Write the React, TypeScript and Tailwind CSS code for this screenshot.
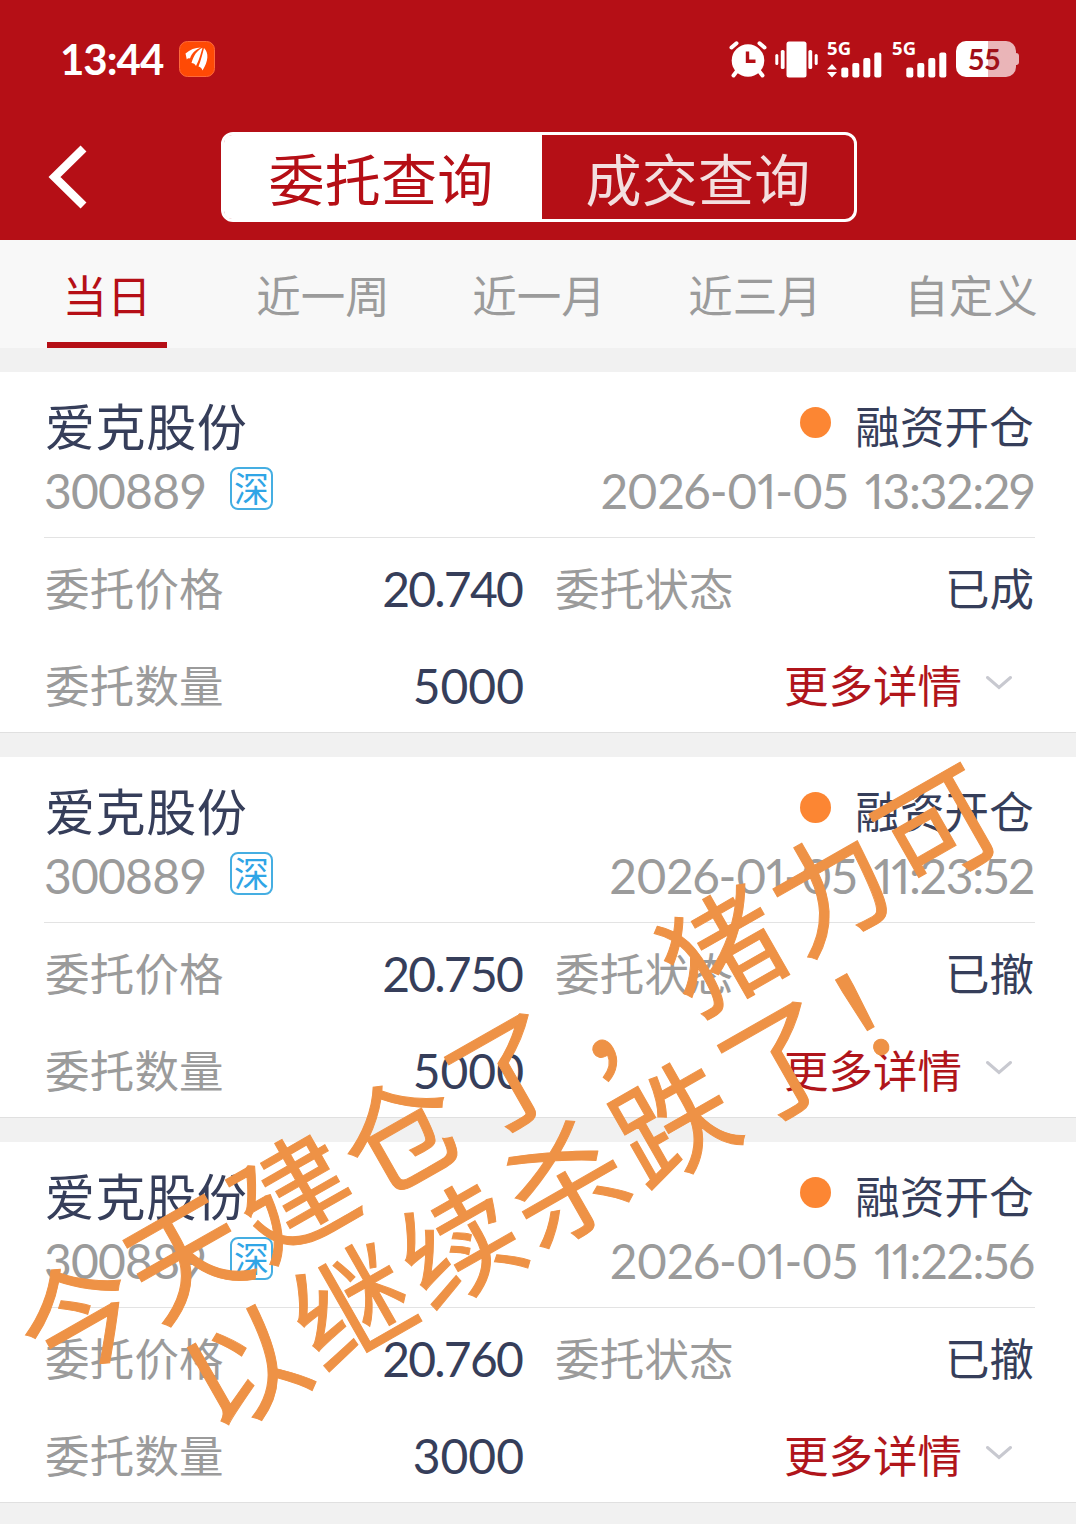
type Order = {
  name: string;
  side: string;
  code: string;
  date: string;
  time: string;
  price: string;
  status: string;
  amount: string;
};

const orders: Order[] = [
  {
    name: "爱克股份",
    side: "融资开仓",
    code: "300889",
    date: "2026-01-05",
    time: "13:32:29",
    price: "20.740",
    status: "已成",
    amount: "5000",
  },
  {
    name: "爱克股份",
    side: "融资开仓",
    code: "300889",
    date: "2026-01-05",
    time: "11:23:52",
    price: "20.750",
    status: "已撤",
    amount: "5000",
  },
  {
    name: "爱克股份",
    side: "融资开仓",
    code: "300889",
    date: "2026-01-05",
    time: "11:22:56",
    price: "20.760",
    status: "已撤",
    amount: "3000",
  },
];

const tabs = ["当日", "近一周", "近一月", "近三月", "自定义"];

function AppBadge() {
  return (
    <svg width="36" height="36" viewBox="0 0 36 36">
      <rect x="0.5" y="0.5" width="35" height="35" rx="8" fill="#ff4a05" stroke="#ff6a3a" />
      <g fill="#fff">
        <path d="M6.500 12.500C11 8.500 16 6.500 22 6.500C16 9 12.500 12.500 11 17.500C9.500 17 8.500 17.500 7.800 18.500Z" />
        <path d="M12.500 22C15 14 18 9.500 23.500 6.800C22 12 20.500 18 17 25C16 23 14.500 22 12.500 22Z" />
        <path d="M19.500 25.500C22 19 23.500 13 25 7C30 12 29.500 20 23.500 29.500C23 27.500 21.500 26 19.500 25.500Z" />
      </g>
    </svg>
  );
}

function AlarmIcon() {
  return (
    <svg width="38" height="37" viewBox="0 0 38 37">
      <g stroke="#fff" strokeWidth="4" strokeLinecap="round" fill="none">
        <path d="M2.500 6.500L7.500 2.300M35.500 6.500L30.500 2.300" />
        <path d="M8 30L4.500 34.500M30 30L33.500 34.500" />
      </g>
      <circle cx="19" cy="19.500" r="16.300" fill="#fff" />
      <path d="M18.500 10.500V20.200H26.500" stroke="#b50f16" strokeWidth="3.400" fill="none" />
    </svg>
  );
}

function VibrateIcon() {
  return (
    <svg width="43" height="37" viewBox="0 0 43 37" fill="#fff">
      <rect x="11.500" y="0.500" width="20" height="36" rx="2.500" />
      <rect x="0.300" y="13" width="3" height="11" rx="1.500" />
      <rect x="5.800" y="9" width="3.800" height="19" rx="1.600" />
      <rect x="33.400" y="9" width="3.800" height="19" rx="1.600" />
      <rect x="39.700" y="13" width="3" height="11" rx="1.500" />
    </svg>
  );
}

function Signal({ arrows = false }: { arrows?: boolean }) {
  return (
    <div className="relative h-[37px] w-[55px]">
      <span className="absolute -top-[2px] left-0 font-['Noto_Sans',sans-serif] text-[18.5px] leading-[18px] font-bold tracking-[0.2px]">
        5G
      </span>
      <svg width="55" height="37" viewBox="0 0 55 37" fill="#fff">
        {arrows && <path d="M0 28.500L5 23L10 28.500ZM0 31L5 36.500L10 31Z" />}
        <rect x="14.300" y="26.500" width="7" height="10" rx="2" />
        <rect x="25.300" y="22" width="7" height="14.500" rx="2" />
        <rect x="36.300" y="17" width="7" height="19.500" rx="2" />
        <rect x="47.300" y="11.500" width="7" height="25" rx="2" />
      </svg>
    </div>
  );
}

function Battery() {
  return (
    <div className="flex items-center">
      <div className="flex h-9 w-[60px] items-center justify-center rounded-[10px] bg-linear-to-r from-white from-53% to-[#eab5b8] to-53% pr-1 font-['Lato'] text-[29px] leading-9 font-bold text-[#a00f18]">
        <span className="tracking-[-0.6px]">55</span>
      </div>
      <div className="h-3 w-[3px] rounded-r-sm bg-[#eab5b8]" />
    </div>
  );
}

function Header() {
  return (
    <header className="h-60 bg-[#b50f16] text-white">
      <div className="flex h-[118px] items-center pr-[57px] pl-[60px]">
        <span className="w-[103px] font-['Lato'] text-[42px] leading-none font-bold tracking-[-1px]">13:44</span>
        <div className="ml-4">
          <AppBadge />
        </div>
        <div className="ml-auto flex items-center">
          <AlarmIcon />
          <div className="ml-2">
            <VibrateIcon />
          </div>
          <div className="ml-[9px]">
            <Signal arrows />
          </div>
          <div className="ml-[10px]">
            <Signal />
          </div>
          <div className="ml-[9px]">
            <Battery />
          </div>
        </div>
      </div>
      <div className="flex pt-[14px]">
        <div className="flex w-[221px] items-center pl-12">
          <svg width="40" height="64" viewBox="0 0 40 64" fill="none">
            <path d="M35.500 3.500L6.500 32L35.500 60.500" stroke="#fff" strokeWidth="8.400" />
          </svg>
        </div>
        <div className="flex h-[90px] w-[636px] rounded-xl border-[3px] border-white text-[56px] leading-[89px] tracking-[0.3px]">
          <div className="w-[318px] rounded-l-lg bg-white pr-1 text-center text-[#b50f16]">委托查询</div>
          <div className="flex-1 text-center text-[#f3dfe0]">成交查询</div>
        </div>
      </div>
    </header>
  );
}

function OrderCard({ order }: { order: Order }) {
  return (
    <section className="mb-6 h-[361px] border-b border-[#e0e0e0] bg-white pr-[42px] pl-[45px] text-[44.5px] text-[#363e5a]">
      <div className="-mr-px -ml-px h-[166px] border-b border-[#e3e3e3] pt-[23px]">
        <div className="flex h-16 items-center">
          <span className="ml-px text-[50px] leading-none tracking-[0.6px]">{order.name}</span>
          <span className="mt-[-9px] ml-auto size-[31px] rounded-full bg-[#fc8633]" />
          <span className="mr-px ml-6 leading-none tracking-[0.2px]">{order.side}</span>
        </div>
        <div className="flex h-16 items-center text-[48px] leading-none text-[#9b9b9b]">
          <span className="w-40 tracking-[-0.8px]">{order.code}</span>
          <span className="mt-[-6px] ml-[26px] flex size-[43px] items-center justify-center rounded-lg border-2 border-[#45aee2] text-[35px] leading-none text-[#2fa5e6]">
            深
          </span>
          <span className="ml-auto tracking-[-1px] proportional-nums">{order.date}</span>
          <span className="mr-px ml-[17px] tracking-[-1.2px] proportional-nums">{order.time}</span>
        </div>
      </div>
      <div className="grid grid-cols-[479px_1fr] grid-rows-[97px_97px] gap-x-[31px] pt-[2px] leading-[97px]">
        <div className="flex justify-between">
          <span className="text-[#9b9b9b] tracking-[0.2px]">委托价格</span>
          <span className="pr-0.5 text-[48px] tracking-[-1.8px]">{order.price}</span>
        </div>
        <div className="flex justify-between">
          <span className="text-[#9b9b9b] tracking-[0.2px]">委托状态</span>
          <span>{order.status}</span>
        </div>
        <div className="flex justify-between">
          <span className="text-[#9b9b9b] tracking-[0.2px]">委托数量</span>
          <span className="text-[48px]">{order.amount}</span>
        </div>
        <div className="flex items-center justify-end pr-[22px] text-[#b0151b]">
          <span>更多详情</span>
          <svg className="mt-[-5px] ml-6" width="26" height="16" viewBox="0 0 26 16" fill="none">
            <path d="M1.500 2.500L13 12.500L24.500 2.500" stroke="#c8c9d0" strokeWidth="3" strokeLinecap="round" />
          </svg>
        </div>
      </div>
    </section>
  );
}

export default function App() {
  return (
    <div className="relative h-[1524px] w-[1076px] overflow-hidden bg-[#f1f1f1] font-['Lato','Noto_Sans_CJK_SC',sans-serif]">
      <Header />
      <nav className="mb-6 -ml-px flex h-[108px] bg-[#f8f8f8] text-[44.5px] leading-[112px] text-[#9b9b9b]">
        {tabs.map((tab, i) => (
          <div
            key={tab}
            className={
              i === 0
                ? "flex h-[108px] w-[216px] shrink-0 justify-center text-[#b50f16]"
                : "h-[108px] w-[216px] shrink-0 text-center"
            }
          >
            {i === 0 ? <span className="h-[108px] w-[120px] border-b-[6px] border-[#b50f16] text-center">{tab}</span> : tab}
          </div>
        ))}
      </nav>
      <main>
        {orders.map((order) => (
          <OrderCard key={order.time} order={order} />
        ))}
      </main>

      {/* Slanted note across the list */}
      <div className="absolute top-[995px] left-[-62px] w-[1200px] rotate-[-29.700deg] text-center font-['Noto_Sans_CJK_SC',sans-serif] text-[118px] leading-[125px] tracking-[5.500px] whitespace-nowrap text-[#ee9246] [-webkit-text-stroke:1px_#ee9246]">
        <p>今天建仓了，猪力可</p>
        <p className="-ml-2">以继续杀跌了！</p>
      </div>
    </div>
  );
}
